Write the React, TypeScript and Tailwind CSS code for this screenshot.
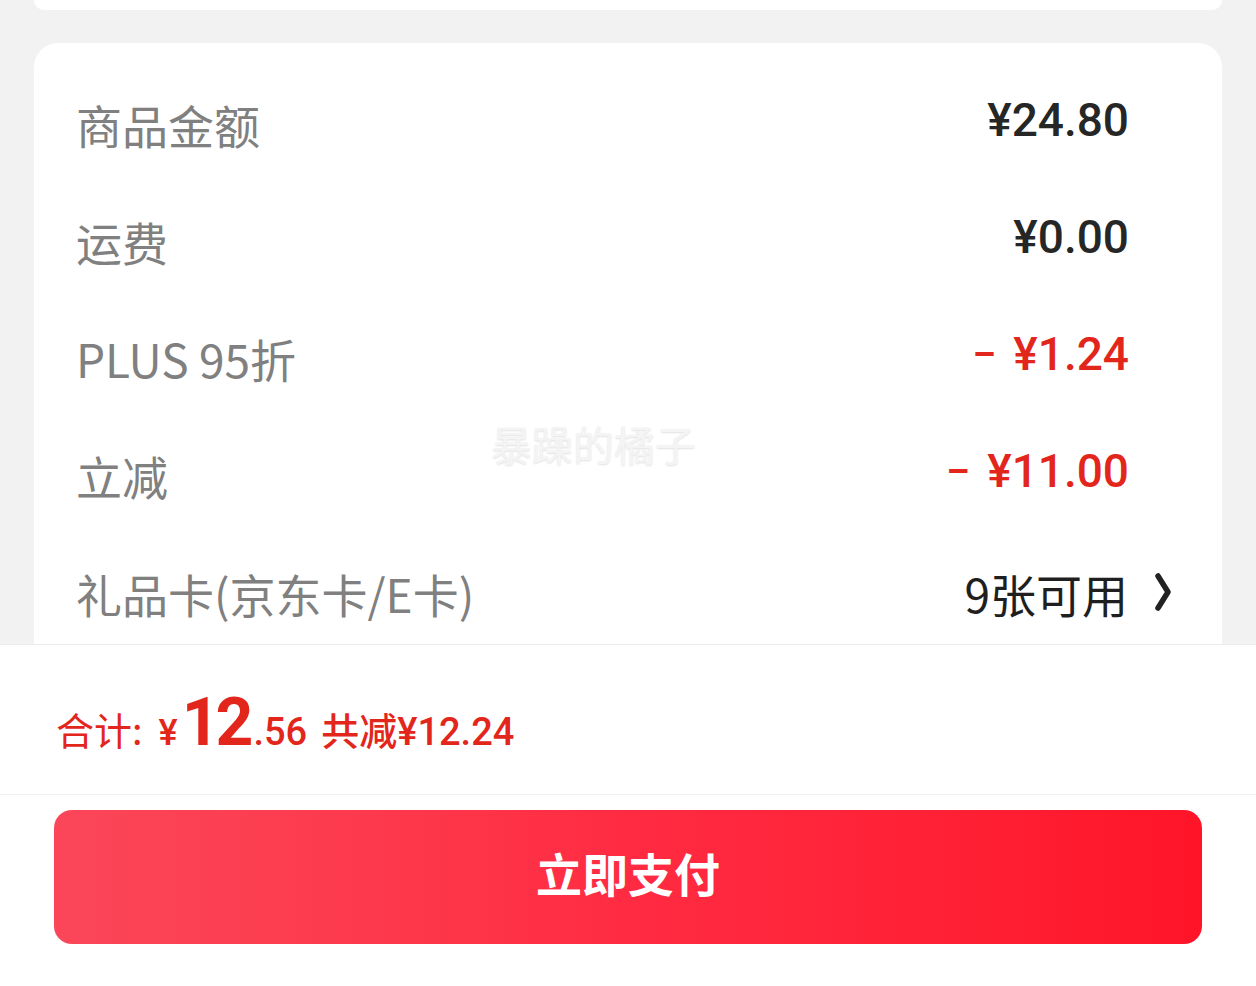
import React from "react";

function Row({ label, children, last = false, red = false }: { label: string; children: React.ReactNode; last?: boolean; red?: boolean }) {
  return (
    <div className={`flex h-[117.25px] items-center justify-between pl-[42px] ${last ? "pr-[50px]" : "pr-[93px]"}`}>
      <span className="font-['Noto_Sans_CJK_SC',sans-serif] text-[46px] leading-none text-[#808080]">{label}</span>
      <div className={`flex items-center ${red ? "text-[#e3261c]" : "text-[#262626]"}`}>{children}</div>
    </div>
  );
}

function Money({ minus = false, children }: { minus?: boolean; children: React.ReactNode }) {
  return (
    <span className="mt-[-8px] font-['Roboto',sans-serif] text-[46px] font-medium leading-none">
      {minus && <span className="relative -top-[3px] mr-[18px] text-[36px] font-bold">–</span>}
      {children}
    </span>
  );
}

export default function App() {
  return (
    <div className="relative flex h-[986px] w-[1256px] flex-col overflow-hidden bg-[#f2f2f2]">
      <div className="flex h-[644px] shrink-0 flex-col px-[34px]">
        <div className="h-[10px] shrink-0 rounded-b-[24px] bg-white" />
        <div className="mt-[33px] min-h-0 flex-1 overflow-hidden rounded-t-[24px] bg-white pt-[22px]">
          <Row label="商品金额">
            <Money>¥24.80</Money>
          </Row>
          <Row label="运费">
            <Money>¥0.00</Money>
          </Row>
          <Row label="PLUS 95折" red>
            <Money minus>¥1.24</Money>
          </Row>
          <Row label="立减" red>
            <Money minus>¥11.00</Money>
          </Row>
          <Row label="礼品卡(京东卡/E卡)" last>
            <span className="font-['Noto_Sans_CJK_SC',sans-serif] text-[46px] leading-none text-[#1f1f1f]">9张可用</span>
            <svg width="18" height="38" viewBox="0 0 18 38" className="ml-[26px] mt-[-2px]">
              <path d="M4 3 L14 19 L4 35" fill="none" stroke="#222" strokeWidth="5.5" strokeLinecap="round" strokeLinejoin="round" />
            </svg>
          </Row>
        </div>
      </div>

      <div className="flex flex-1 flex-col border-t border-[#ececec] bg-white">
        <div className="flex h-[150px] shrink-0 items-center border-b border-[#f0f0f0] pl-[56px] pt-[6px]">
          <div className="flex items-baseline text-[#e3261c]">
            <span className="font-['Noto_Sans_CJK_SC',sans-serif] text-[38px] leading-none">合计:</span>
            <span className="ml-[16px] font-['Roboto',sans-serif] text-[36px] font-medium leading-none">¥</span>
            <span className="ml-[4px] font-['Roboto',sans-serif] text-[66px] font-bold leading-none tracking-[-4px]">12</span>
            <span className="ml-[4px] font-['Roboto',sans-serif] text-[38px] font-medium leading-none">.56</span>
            <span className="ml-[14px] font-['Noto_Sans_CJK_SC',sans-serif] text-[38px] font-medium leading-none">共减</span>
            <span className="font-['Roboto',sans-serif] text-[38px] font-medium leading-none">¥12.24</span>
          </div>
        </div>
        <div className="px-[54px] pt-[15px]">
          <button className="flex h-[134px] w-full items-center justify-center rounded-[18px] bg-linear-to-r from-[#fb4659] via-[#ff2b42] to-[#ff1428] pb-[10px] font-['Noto_Sans_CJK_SC',sans-serif] text-[46px] font-bold leading-none text-white">
            立即支付
          </button>
        </div>
      </div>

      <div className="pointer-events-none absolute left-[491px] top-[423px] font-['Noto_Sans_CJK_SC',sans-serif] text-[41px] leading-none text-[#f4f4f4] [text-shadow:0_1px_2px_rgba(0,0,0,0.12)]">
        暴躁的橘子
      </div>
    </div>
  );
}
